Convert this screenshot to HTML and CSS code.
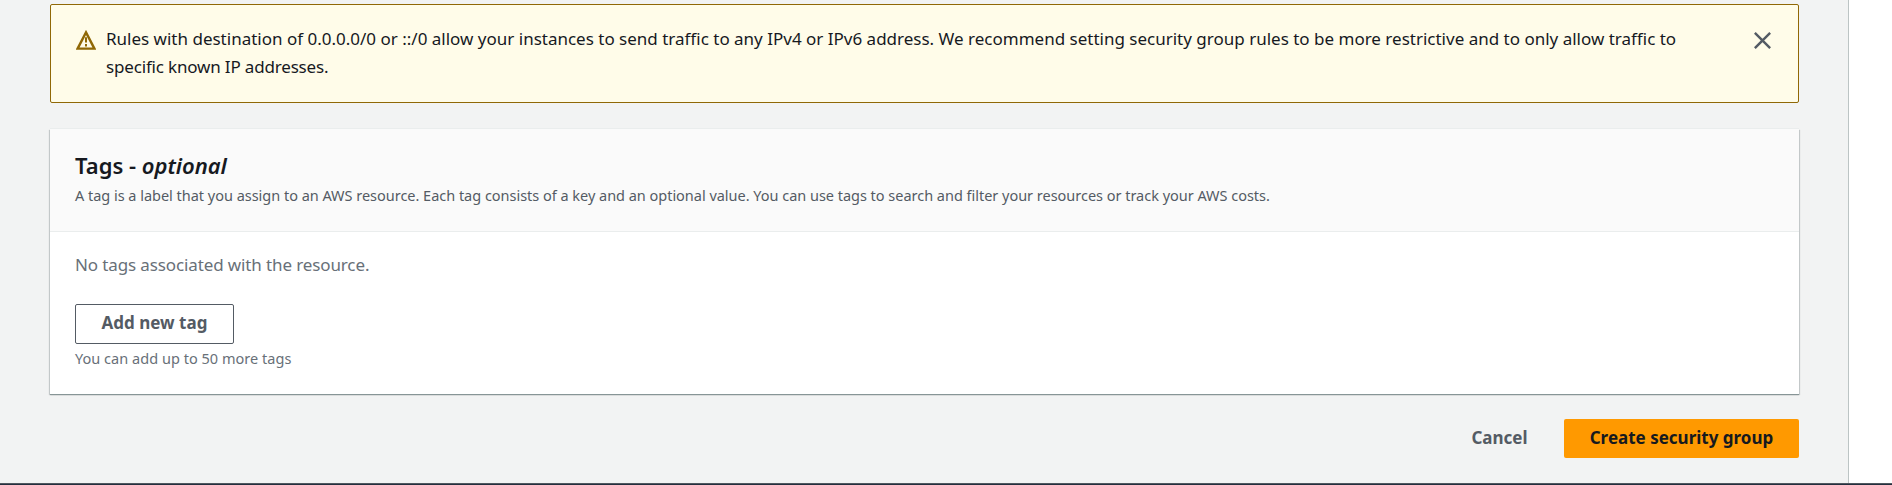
FILE: index.html
```html
<!DOCTYPE html>
<html lang="en">
<head>
<meta charset="utf-8">
<title>Create security group</title>
<link rel="stylesheet" href="styles.css">
</head>
<body>
<div class="page">
  <main class="content">
    <section class="alert">
      <svg class="alert-icon" viewBox="0 0 20 20"><path d="M10 2.4 18.4 18.6H1.6Z"/><path class="mark" d="M10 7.2v5.4M10 14v2.4"/></svg>
      <p class="alert-text">Rules with destination of 0.0.0.0/0 or ::/0 allow your instances to send traffic to any IPv4 or IPv6 address. We recommend setting security group rules to be more restrictive and to only allow traffic to<br><span class="last-line">specific known IP addresses.</span></p>
      <button class="dismiss" aria-label="Dismiss"><svg viewBox="0 0 16 16"><path d="M.8.8l14.4 14.4M15.2.8.8 15.2"/></svg></button>
    </section>
    <section class="card">
      <header class="card-header">
        <h2 class="title">Tags - <em>optional</em></h2>
        <p class="description">A tag is a label that you assign to an AWS resource. Each tag consists of a key and an optional value. You can use tags to search and filter your resources or track your AWS costs.</p>
      </header>
      <div class="card-body">
        <p class="empty">No tags associated with the resource.</p>
        <button class="button add"><span>Add new tag</span></button>
        <p class="hint">You can add up to 50 more tags</p>
      </div>
    </section>
    <div class="actions">
      <button class="button cancel"><span>Cancel</span></button>
      <button class="button primary"><span>Create security group</span></button>
    </div>
  </main>
  <aside class="side"></aside>
</div>
<footer class="footer"></footer>
</body>
</html>
```
FILE: styles.css
```css
* { box-sizing: border-box; }
body { margin: 0; height: 485px; overflow: hidden; display: flex; flex-direction: column; background: #fff; font-family: "Noto Sans", sans-serif; color: #16191f; }
p, h2 { margin: 0; white-space: nowrap; }
button { font: inherit; padding: 0; border: 0; background: none; }
.page { flex: 1; display: flex; }
.content { width: 1849px; padding: 4px 49px 0 50px; background: #f2f3f3; border-right: 1px solid #bcc4c4; }
.side { flex: 1; background: #fff; }
.footer { height: 2px; background: #232f3e; border-top: 1px solid #50575f; }
.alert { display: flex; align-items: flex-start; width: 1749px; height: 99px; padding: 20px 26px 0 25px; border: 1px solid #906806; border-radius: 2px; background: #fffce9; }
.alert-icon { width: 20px; height: 20px; margin: 5px 10px 0 0; fill: none; stroke: #906806; stroke-width: 2.4; }
.alert-icon .mark { stroke-width: 2; }
.alert-text { flex: 1; font-size: 17px; line-height: 28px; }
.last-line { letter-spacing: -0.17px; }
.dismiss { width: 18px; height: 18px; margin-top: 6px; }
.dismiss svg { display: block; width: 17px; height: 17px; fill: none; stroke: #545b64; stroke-width: 2.3; }
.card { width: 1749px; height: 265px; margin-top: 26px; background: #fff; box-shadow: 0 1px 0 0 #879596, 0 -1px 0 0 #eaeded, 0 1px 1px 0 rgba(0,28,36,.3), 1px 1px 1px 0 rgba(0,28,36,.15), -1px 1px 1px 0 rgba(0,28,36,.15); }
.card-header { height: 103px; padding: 22px 25px 0; background: #fafafa; border-bottom: 1px solid #eaeded; }
.title { font-size: 22px; line-height: 28px; font-weight: 600; letter-spacing: 0; }
.description { margin-top: 4px; font-size: 14.5px; line-height: 24px; letter-spacing: -0.02px; color: #545b64; }
.card-body { padding: 19px 25px 0; }
.empty { font-size: 17px; line-height: 28px; letter-spacing: -0.12px; color: #687078; }
.button { display: flex; align-items: center; justify-content: center; height: 40px; padding-bottom: 1px; border-radius: 2px; font-size: 17px; font-weight: 700; line-height: 28px; white-space: nowrap; }
.add { width: 159px; margin-top: 25px; padding-bottom: 2px; border: 1px solid #545b64; color: #545b64; }
.hint { margin-top: 3px; font-size: 14.5px; line-height: 22px; color: #687078; letter-spacing: 0.03px; }
.actions { display: flex; justify-content: flex-end; width: 1749px; margin-top: 25px; }
.cancel { width: 109px; height: 39px; margin-right: 10px; color: #545b64; }
.primary { width: 235px; height: 39px; background: #ff9900; color: #16191f; }
```
